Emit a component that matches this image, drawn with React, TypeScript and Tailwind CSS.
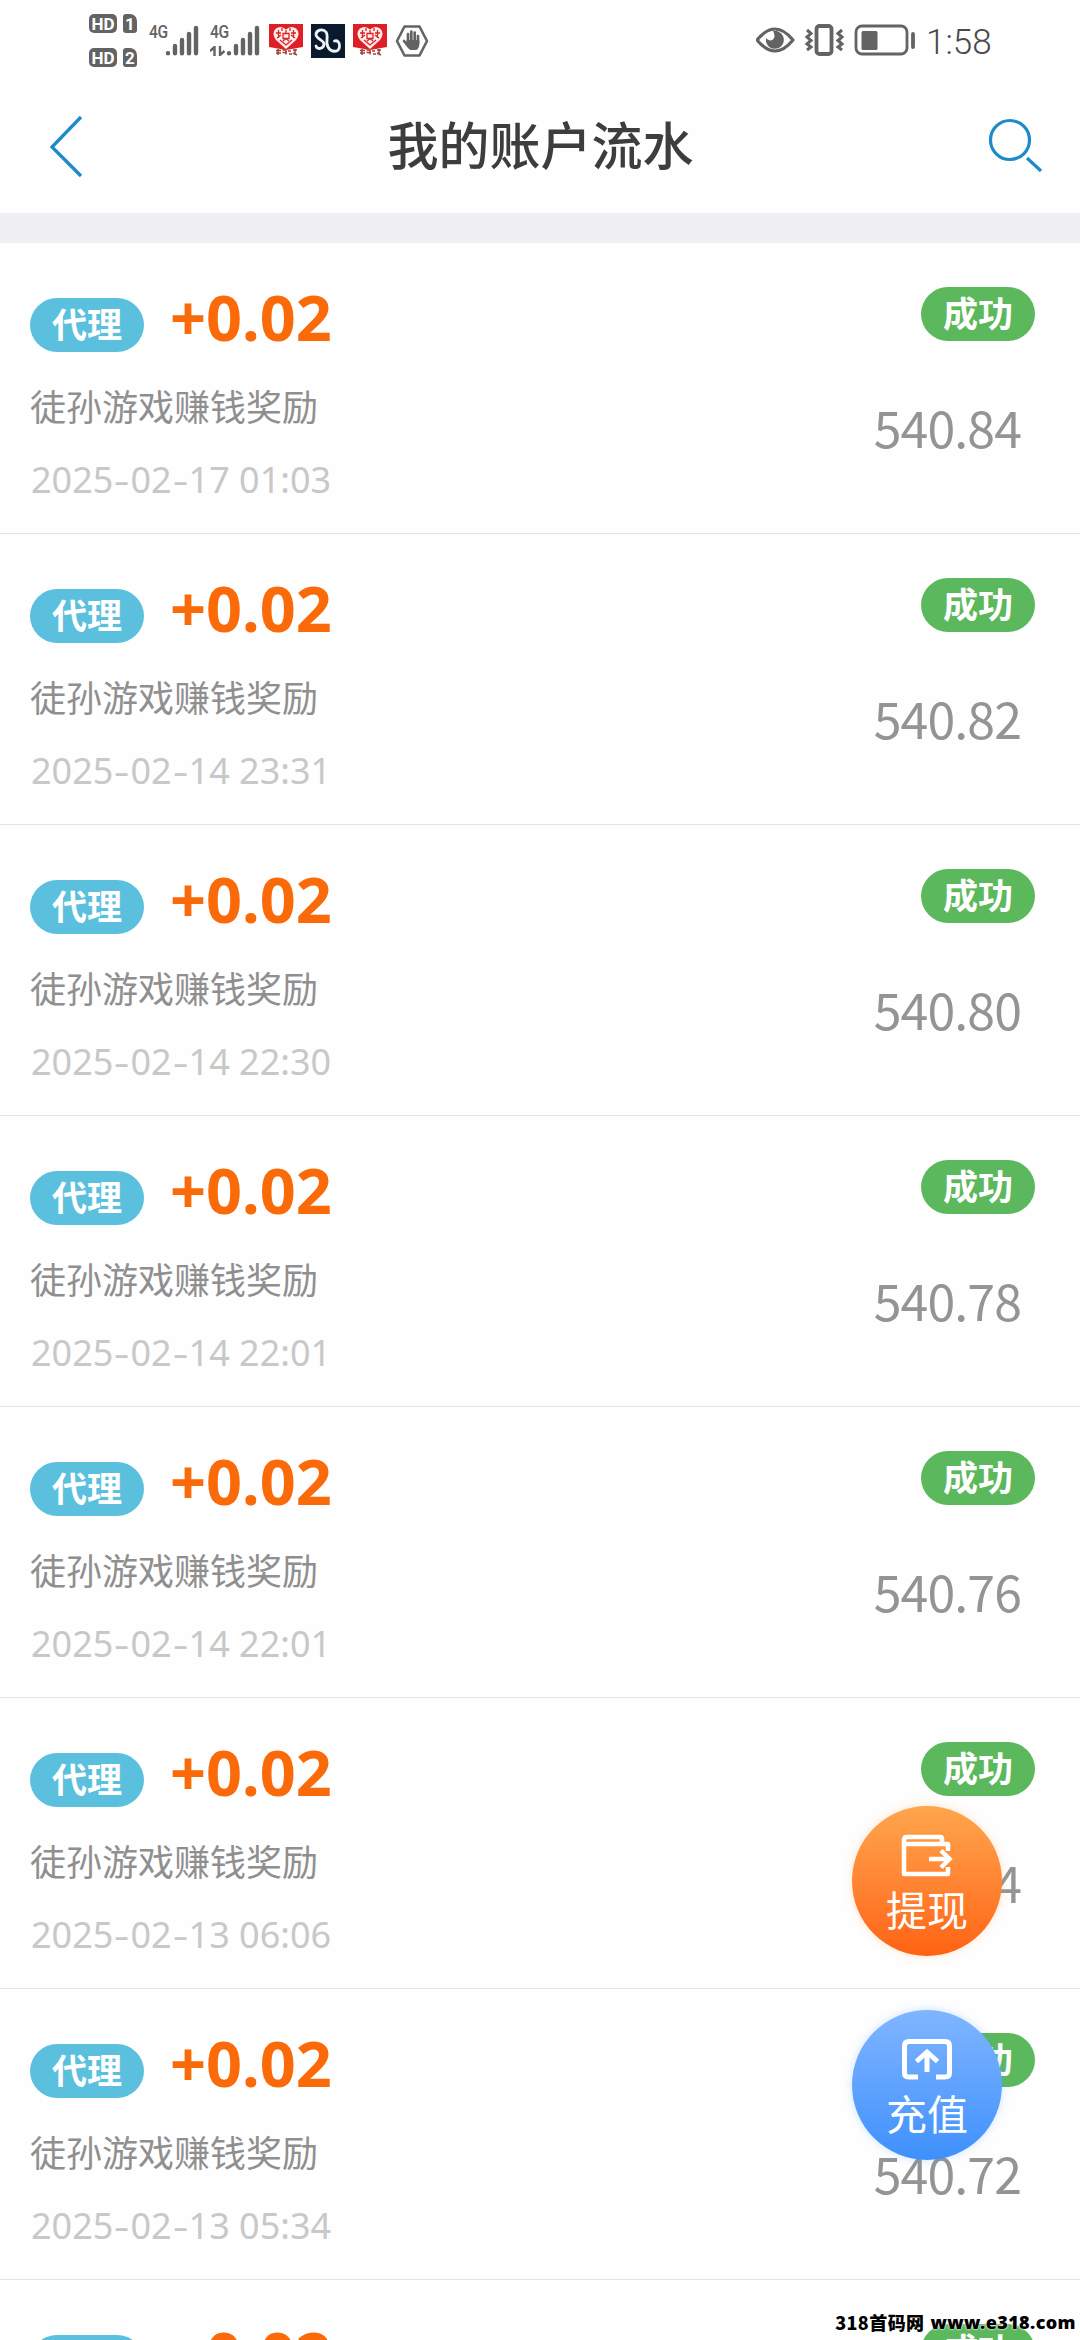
import React from "react";

const records = [
  { time: "2025-02-17 01:03", balance: "540.84" },
  { time: "2025-02-14 23:31", balance: "540.82" },
  { time: "2025-02-14 22:30", balance: "540.80" },
  { time: "2025-02-14 22:01", balance: "540.78" },
  { time: "2025-02-14 22:01", balance: "540.76" },
  { time: "2025-02-13 06:06", balance: "540.74" },
  { time: "2025-02-13 05:34", balance: "540.72" },
  { time: "2025-02-13 05:21", balance: "540.70" },
];

function HdBadge({ n }: { n: number }) {
  return (
    <div className="flex h-[19px] gap-[6px] font-['Roboto'] leading-[20px] font-bold text-white">
      <span className="w-[28px] rounded-[5px] bg-[#636363] text-center text-[17px]">HD</span>
      <span className="w-[14px] rounded-[3px] rounded-tr-[7px] bg-[#636363] text-center text-[17px]">{n}</span>
    </div>
  );
}

function Signal({ data }: { data?: boolean }) {
  return (
    <div className="flex h-[31px] w-[50px] items-end">
      <div className="flex h-full w-[16px] flex-col justify-between">
        <span className="origin-left scale-x-[0.82] font-['Roboto'] text-[19px] leading-[14px] font-medium tracking-[-0.5px] text-[#636363]">4G</span>
        {data && (
          <svg className="h-[10px] w-[16px]" viewBox="0 0 16 10" stroke="#636363" strokeWidth="2.4" fill="none">
            <path d="M0 5L4.500 1V10M10 0V9L14.500 5" />
          </svg>
        )}
      </div>
      <svg className="h-[31px] w-[34px]" viewBox="0 0 34 31" stroke="#636363" strokeWidth="4.4" strokeLinecap="round">
        <path d="M3 28.2V28.3M10 21V28.3M17 15V28.3M24 9V28.3M31 3V28.3" />
      </svg>
    </div>
  );
}

function HeartApp() {
  return (
    <svg className="h-[34px] w-[34px]" viewBox="0 0 34 34">
      <path d="M0 0H34V23L17 26L0 23Z" fill="#df1f26" />
      <path d="M17 25L7 16Q2 9 7 4.500Q12 1 17 5.500Q22 1 27 4.500Q32 9 27 16Z" fill="#fff0ec" />
      <path
        d="M7 9H12M9.500 6V14M12 11L8 14M22 9H27M24.500 6V14M22 11L26 14M14 9.500H20V14.500H14ZM17 6V9M11 16L17 21L23 16M14 17L17 14.500L20 17M13 4V7M21 4V7"
        fill="none"
        stroke="#df1f26"
        strokeWidth="1.3"
      />
      <path
        d="M7 26.500H12M9 25V31M7 29H12M13.500 26H17V30.500M13.500 28.500H18M19 27H22M20 30H23M24 26H28M26 25V31M24 29L28 31"
        stroke="#a0423a"
        strokeWidth="1.5"
        fill="none"
      />
    </svg>
  );
}

function CurlApp() {
  return (
    <svg className="h-[34px] w-[34px]" viewBox="0 0 34 34" fill="none" stroke="#f2f5f8" strokeLinecap="round">
      <rect width="34" height="34" fill="#081a2c" stroke="none" />
      <path
        d="M5 22C6 26 13 25 13 20C13 16 5 15 5 10.500C5 6 12 4 15 8C18 12 14 18 17 23C20 28.500 28 29 28.500 22.500C29 18 26 16 23.500 17"
        strokeWidth="2.8"
      />
    </svg>
  );
}

function HandHex() {
  return (
    <svg className="h-[34px] w-[34px]" viewBox="0 0 34 34">
      <path d="M9.500 2.500H24.500L32 17L24.500 31.500H9.500L2 17Z" fill="none" stroke="#636363" strokeWidth="2.6" strokeLinejoin="round" />
      <g stroke="#636363" strokeWidth="2.7" strokeLinecap="round">
        <path d="M13 10V19M16.300 7.500V19M19.700 8.500V19M23 12V20M9 17L13 22" />
      </g>
      <path d="M11.700 16H24.300V20Q24 26 20 26H16Q13.500 26 11 20Z" fill="#636363" />
    </svg>
  );
}

function StatusBar() {
  return (
    <div className="flex h-[80px] items-start pr-[88px] pl-[89px]">
      <div className="mt-[14px] flex flex-col gap-[15px]">
        <HdBadge n={1} />
        <HdBadge n={2} />
      </div>
      <div className="mt-[25px] ml-[12px] flex gap-[11px]">
        <Signal />
        <Signal data />
      </div>
      <div className="mt-[24px] ml-[9px] flex gap-[8px]">
        <HeartApp />
        <CurlApp />
        <HeartApp />
        <HandHex />
      </div>
      <div className="mt-[24px] ml-auto flex">
        <svg className="h-[32px] w-[160px]" viewBox="0 0 160 32" fill="none" stroke="#636363">
          <path d="M1 16Q19 -6 37 16Q19 38 1 16Z" strokeWidth="3.2" strokeLinejoin="round" />
          <path d="M17 7A9 9 0 1 1 10 14Q13 18 17 15.500Q20 12 17 7Z" fill="#636363" stroke="none" />
          <rect x="60.500" y="2" width="15" height="28" rx="3" strokeWidth="3.8" />
          <path d="M51 6L55 9.500L51 13L55 16.500L51 20L55 23L51 26M86 6L82 9.500L86 13L82 16.500L86 20L82 23L86 26" strokeWidth="3" />
          <rect x="100" y="2" width="51" height="28" rx="6" strokeWidth="2.8" />
          <rect x="105.500" y="7" width="16" height="19" rx="1.500" fill="#636363" stroke="none" />
          <path d="M157 10V23" strokeWidth="3.8" strokeLinecap="round" />
        </svg>
        <span className="ml-[10px] w-[66px] font-['Roboto'] text-[35px] leading-[37px] font-light whitespace-nowrap text-[#4a4a4a]">1:58</span>
      </div>
    </div>
  );
}

function Header() {
  return (
    <header className="flex h-[133px] items-center justify-between pr-[36px] pl-[46px]">
      <svg className="h-[64px] w-[60px]" viewBox="0 0 60 64" fill="none" stroke="#1f8ac8" strokeWidth="3.3">
        <path d="M35 2L6 32L35 61" />
      </svg>
      <h1 className="mr-[13px] mb-[8px] text-[51px] leading-[60px] font-medium text-[#3d3d3d]">我的账户流水</h1>
      <svg className="h-[60px] w-[56px]" viewBox="0 0 56 60" fill="none" stroke="#1f8ac8" strokeWidth="3.2">
        <circle cx="22" cy="23" r="19.500" />
        <path d="M39 41L53 54" />
      </svg>
    </header>
  );
}

function Timestamp({ value }: { value: string }) {
  return (
    <p className="mt-[23px] ml-px font-['Noto_Sans'] text-[36px] leading-[52px] text-[#c8c8c8]">
      {value.split("-").map((part, i) => (
        <React.Fragment key={i}>
          {i > 0 && <span className="inline-block w-[17px] scale-x-135 text-center">-</span>}
          {part}
        </React.Fragment>
      ))}
    </p>
  );
}

function Record({ time, balance }: { time: string; balance: string }) {
  return (
    <li className="flex h-[291px] justify-between border-b border-[#e4e4e6] pr-[45px] pl-[30px]">
      <div>
        <div className="flex">
          <span className="mt-[55px] h-[54px] w-[114px] rounded-full bg-[#5bc0de] text-center text-[35px] leading-[50px] font-bold text-white">代理</span>
          <span className="mt-[34px] ml-[26px] font-['Noto_Sans'] text-[63px] leading-[80px] font-bold text-[#fa6a09]">+0.02</span>
        </div>
        <p className="mt-[22px] text-[36px] leading-[52px] text-[#8f8f8f]">徒孙游戏赚钱奖励</p>
        <Timestamp value={time} />
      </div>
      <div className="flex flex-col items-end">
        <span className="mt-[44px] h-[54px] w-[114px] rounded-full bg-[#5cb85c] text-center text-[35px] leading-[50px] font-bold text-white">成功</span>
        <span className="mt-[55px] mr-[14px] text-[50px] leading-[60px] tracking-[-0.9px] text-[#949494]">{balance}</span>
      </div>
    </li>
  );
}

export default function App() {
  return (
    <div className="relative h-[2340px] w-[1080px] overflow-hidden bg-[#fefefe] font-['Noto_Sans_CJK_SC',sans-serif]">
      <StatusBar />
      <Header />
      <div className="h-[30px] bg-[#efeff4]" />
      <ul>
        {records.map((r, i) => (
          <Record key={i} {...r} />
        ))}
      </ul>

      <div className="absolute top-[1806px] left-[852px] flex flex-col gap-[54px] text-[41px] leading-[60px] text-white">
        <button className="flex h-[150px] w-[150px] flex-col items-center rounded-full bg-linear-to-b from-[#ffa54d] to-[#ff620f] pt-[28px] shadow-[0_0_10px_rgba(255,150,60,0.25)]">
          <svg className="h-[44px] w-[52px]" viewBox="0 0 52 44" fill="none" stroke="#fff" strokeWidth="4.5">
            <path d="M2 10H41M47 17V10H41V5Q41 3 39 3H6Q3 3 3 6V40H47V33" strokeLinejoin="round" />
            <path d="M28 25H47M40 16.500L48.500 25L40 33.500" strokeWidth="4.5" />
          </svg>
          <span>提现</span>
        </button>
        <button className="flex h-[150px] w-[150px] flex-col items-center rounded-full bg-linear-to-b from-[#7fb5ff] to-[#3d90fc] pt-[28px] shadow-[0_0_10px_rgba(60,150,255,0.25)]">
          <svg className="h-[44px] w-[52px]" viewBox="0 0 52 44" fill="none" stroke="#fff" strokeWidth="5">
            <path d="M17 39H8Q3.500 39 3.500 35V8Q3.500 3.500 8 3.500H44Q48.500 3.500 48.500 8V35Q48.500 39 44 39H35" />
            <path d="M26 34V14M15.500 23.500L26 14L36.500 23.500" />
          </svg>
          <span>充值</span>
        </button>
      </div>

      <div className="absolute right-[4px] bottom-[5px] flex gap-[6px] text-[18px] leading-[26px] font-black tracking-[0.4px] whitespace-nowrap text-black [text-shadow:0_0_2px_#fff,0_0_2px_#fff]">
        <span>318首码网</span>
        <span className="font-['Noto_Sans']">www.e318.com</span>
      </div>
    </div>
  );
}
